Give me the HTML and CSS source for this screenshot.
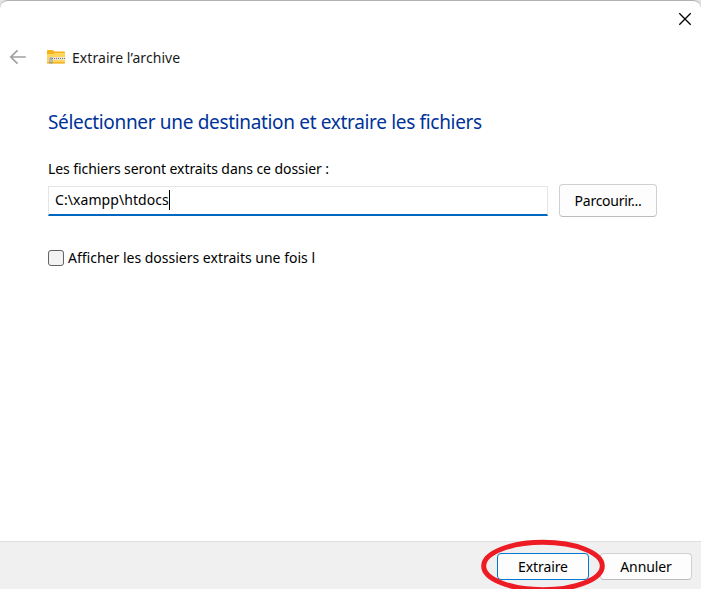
FILE: index.html
```html
<!DOCTYPE html>
<html lang="fr">
<head>
<meta charset="utf-8">
<title>Extraire l’archive</title>
<link rel="stylesheet" href="styles.css">
</head>
<body>
<div class="window">
  <div class="titlebar">
    <button class="close" aria-label="Fermer">
      <svg width="14" height="14" viewBox="0 0 14 14"><path d="M1.3 1.3 12.7 12.7M12.7 1.3 1.3 12.7" fill="none" stroke="#000" stroke-width="1.3"/></svg>
    </button>
  </div>
  <header class="header">
    <svg class="back" width="18" height="16" viewBox="0 0 18 16"><path d="M16.8 8H2M8.5 1.3 1.8 8 8.5 14.7" fill="none" stroke="#a0a0a0" stroke-width="1.7"/></svg>
    <svg class="folder" width="18" height="14" viewBox="0 0 18 14">
      <path d="M0 1Q0 0 1 0H5.5L7.5 1.5H17Q18 1.5 18 2.5V8H0Z" fill="#f5b31b"/>
      <path d="M0 4H6.5L8 3H18V12.5Q18 13.5 17 13.5H1Q0 13.5 0 12.5Z" fill="#ffd65c"/>
      <path d="M0 12H18V12.7Q18 13.6 17 13.6H1Q0 13.6 0 12.7Z" fill="#f3b62b"/>
      <path d="M2 8.5H18" stroke="#e9e3cf" stroke-width="3"/>
      <path d="M3 8.5H18" stroke="#77777b" stroke-width="1" stroke-dasharray="1 1"/>
      <path d="M2.5 7.5H5.5V13.6H2.5Z" fill="#999"/>
      <path d="M3.5 9H4.5V12H3.5Z" fill="#d9d9d9"/>
    </svg>
    <span class="title">Extraire l’archive</span>
  </header>
  <main class="content">
    <h1 class="heading"><span>Sélectionner une destination et extraire les fichiers</span></h1>
    <div class="label"><span>Les fichiers seront extraits dans ce dossier :</span></div>
    <div class="row">
      <div class="field"><span class="path">C:\xampp\htdocs</span><span class="caret"></span></div>
      <button class="button browse"><span>Parcourir...</span></button>
    </div>
    <div class="check"><span class="box"></span><span class="check-text">Afficher les dossiers extraits une fois l</span></div>
  </main>
  <footer class="footer">
    <button class="button primary"><span>Extraire</span>
      <svg class="ring" width="126" height="54" viewBox="0 0 126 54"><ellipse cx="63" cy="27" rx="59.3" ry="23.7" fill="none" stroke="#ed1c24" stroke-width="5"/></svg>
    </button>
    <button class="button cancel"><span>Annuler</span></button>
  </footer>
</div>
</body>
</html>
```
FILE: styles.css
```css
* { box-sizing: border-box; }
html { background: #e4e4e4; }
body { margin: 0; height: 589px; overflow: hidden; font: 14px/20px "Noto Sans", "Open Sans", sans-serif; color: #000; }
button { font: inherit; color: inherit; padding: 0; }
.window { height: 589px; display: flex; flex-direction: column; background: #fff; border-top: 1px solid #b0b0b0; border-radius: 8px 8px 0 0; overflow: hidden; }
.titlebar { height: 36px; display: flex; justify-content: flex-end; padding: 11px 9px 0 0; }
.close { border: 0; background: none; width: 14px; height: 14px; display: block; }
.close svg { display: block; }
.header { height: 40px; display: flex; align-items: center; padding-left: 9px; }
.back { margin-right: 20px; }
.folder { margin-right: 7px; }
.title { padding-top: 2px; color: #1a1a1a; letter-spacing: 0.06px; white-space: nowrap; }
.content { flex: 1; padding: 31px 0 0 48px; white-space: nowrap; }
.heading { margin: 0; font-size: 19px; line-height: 28px; font-weight: 400; color: #003399; letter-spacing: -0.33px; }
.label { margin-top: 23px; letter-spacing: -0.07px; }
.row { display: flex; align-items: center; gap: 11px; margin-top: 5px; }
.field { width: 500px; height: 30px; display: flex; align-items: center; padding-left: 6px; border: 1px solid #e5e5e5; border-bottom: 2px solid #0067c0; }
.path { letter-spacing: 0.07px; }
.caret { width: 1px; height: 20px; background: #000; }
.button { display: flex; align-items: center; justify-content: center; background: #fdfdfd; border: 1px solid #d0d0d0; border-bottom-color: #bcbcbc; border-radius: 4px; }
.browse { width: 98px; height: 33px; letter-spacing: -0.25px; }
.check { display: flex; align-items: center; margin-top: 31px; letter-spacing: 0; }
.box { width: 16px; height: 16px; border: 1px solid #626262; border-radius: 3px; background: #f3f3f3; margin-right: 4px; }
.footer { height: 48px; display: flex; gap: 11px; justify-content: flex-end; padding: 11px 9px 0 0; background: #f0f0f0; border-top: 1px solid #dfdfdf; }
.footer .button { width: 92px; height: 27px; letter-spacing: -0.1px; }
.footer .primary { position: relative; border-color: #0078d4; }
.ring { position: absolute; left: -18px; top: -15px; z-index: 1; }
```
